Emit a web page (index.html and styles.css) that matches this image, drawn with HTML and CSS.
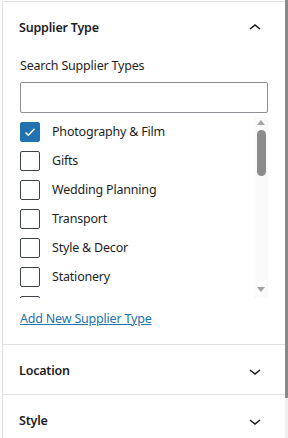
FILE: index.html
```html
<!DOCTYPE html>
<html>
<head>
<meta charset="utf-8">
<link rel="stylesheet" href="styles.css">
</head>
<body>
<div class="panel">
  <section class="section open">
    <div class="section-header">
      <span class="section-title">Supplier Type</span>
      <svg class="chev" viewBox="0 0 24 24" width="24" height="24"><path d="M6.5 12.4L12 8l5.5 4.4-.9 1.2L12 10l-4.6 3.6-1-1.2z"/></svg>
    </div>
    <div class="section-body">
      <label class="search-label">Search Supplier Types</label>
      <input class="search-input" type="text">
      <div class="list">
        <div class="items">
          <div class="item"><span class="box checked"><svg viewBox="0 0 20 20" width="20" height="20"><path d="M5 10.5l3.2 3.2L15 6.5" fill="none" stroke="#fff" stroke-width="1.6"/></svg></span><span class="label">Photography &amp; Film</span></div>
          <div class="item"><span class="box"></span><span class="label">Gifts</span></div>
          <div class="item"><span class="box"></span><span class="label">Wedding Planning</span></div>
          <div class="item"><span class="box"></span><span class="label">Transport</span></div>
          <div class="item"><span class="box"></span><span class="label">Style &amp; Decor</span></div>
          <div class="item"><span class="box"></span><span class="label">Stationery</span></div>
          <div class="item"><span class="box"></span></div>
        </div>
        <div class="scrollbar">
          <span class="arrow up"></span>
          <span class="thumb"></span>
          <span class="spacer"></span>
          <span class="arrow down"></span>
        </div>
      </div>
      <a class="add-link" href="#">Add New Supplier Type</a>
    </div>
  </section>
  <section class="section">
    <div class="section-header">
      <span class="section-title">Location</span>
      <svg class="chev" viewBox="0 0 24 24" width="24" height="24"><path d="M17.5 11.6L12 16l-5.5-4.4.9-1.2L12 14l4.6-3.6 1 1.2z"/></svg>
    </div>
  </section>
  <section class="section">
    <div class="section-header">
      <span class="section-title">Style</span>
      <svg class="chev" viewBox="0 0 24 24" width="24" height="24"><path d="M17.5 11.6L12 16l-5.5-4.4.9-1.2L12 14l4.6-3.6 1 1.2z"/></svg>
    </div>
  </section>
</div>
<div class="page-scroll"><div class="page-thumb"></div></div>
</body>
</html>
```

FILE: styles.css
```css
html, body {
  margin: 0;
  padding: 0;
  background: #fff;
  overflow: hidden;
}
body {
  font-family: "Noto Sans", "Open Sans", sans-serif;
  font-size: 12.5px;
  letter-spacing: -0.2px;
  color: #1e1e1e;
  height: 438px;
}
.panel {
  margin-left: 2px;
  margin-top: 1px;
  width: 282px;
  border-left: 1px solid #e0e0e0;
  min-height: 437px;
}
.section {
  border-top: 1px solid #e0e0e0;
}
.section-header {
  box-sizing: border-box;
  height: 49px;
  display: flex;
  align-items: center;
  justify-content: space-between;
  padding: 2px 18px 0 16px;
}
.section-title {
  font-weight: 600;
  font-size: 12.5px;
  color: #1e1e1e;
}
.chev {
  fill: #1e1e1e;
}
.section-body {
  padding: 0 16px 16px 17px;
  display: flex;
  flex-direction: column;
  align-items: flex-start;
}
.search-label {
  display: block;
  line-height: 18px;
  margin-top: 6px;
  color: #1e1e1e;
}
.search-input {
  box-sizing: border-box;
  margin: 7px 0 0 0;
  width: 248px;
  height: 31px;
  border: 1px solid #8c8f94;
  border-radius: 2px;
  padding: 0 8px;
  background: #fff;
}
.list {
  margin-top: 4px;
  width: 248px;
  height: 181px;
  display: flex;
  overflow: hidden;
}
.items {
  flex: 1;
  display: flex;
  flex-direction: column;
}
.item {
  height: 29px;
  flex: none;
  display: flex;
  align-items: center;
}
.box {
  box-sizing: border-box;
  width: 20px;
  height: 20px;
  border: 1px solid #3c434a;
  border-radius: 2px;
  flex: none;
  display: flex;
  align-items: center;
  justify-content: center;
}
.box.checked {
  background: #2271b1;
  border-color: #2271b1;
}
.label {
  margin-left: 12px;
  color: #1e1e1e;
}
.scrollbar {
  width: 14px;
  background: #fafafa;
  display: flex;
  flex-direction: column;
  align-items: center;
  flex: none;
}
.arrow {
  width: 0;
  height: 0;
  border-left: 4px solid transparent;
  border-right: 4px solid transparent;
}
.arrow.up {
  margin-top: 3px;
  border-bottom: 5px solid #a3a3a3;
}
.arrow.down {
  margin-bottom: 6px;
  border-top: 5px solid #a3a3a3;
}
.thumb {
  margin-top: 5px;
  width: 9px;
  height: 46px;
  border-radius: 5px;
  background: #8b8b8b;
}
.spacer {
  flex: 1;
}
.add-link {
  margin-top: 12px;
  color: #2271b1;
  text-decoration: underline;
  line-height: 18px;
}
.page-scroll {
  position: fixed;
  top: 0;
  right: 0;
  width: 3px;
  height: 438px;
  background: #f0f0f0;
}
.page-thumb {
  width: 3px;
  height: 398px;
  background: #8a8a8a;
}
```
